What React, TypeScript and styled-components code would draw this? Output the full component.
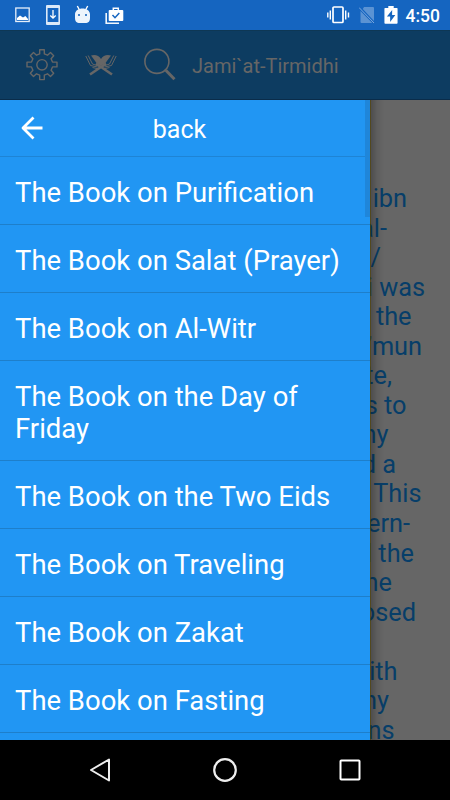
import React from "react";
import styled, { createGlobalStyle } from "styled-components";

const Global = createGlobalStyle`
  *, *::before, *::after { box-sizing: border-box; }
  body { margin: 0; background: #000; font-family: Roboto, "Liberation Sans", sans-serif; }
  svg { display: block; flex: none; }
`;

const Screen = styled.div`
  width: 450px;
  height: 800px;
  display: flex;
  flex-direction: column;
  overflow: hidden;
`;

const StatusBar = styled.header`
  height: 30px;
  flex: none;
  display: flex;
  justify-content: space-between;
  align-items: center;
  padding: 0 10px 0 14px;
  background: #1565c0;
  color: #fff;
`;

const StatusGroup = styled.div<{ $gap: number }>`
  display: flex;
  align-items: center;
  gap: ${(p) => p.$gap}px;
`;

const Clock = styled.span`
  font-size: 17.5px;
  font-weight: 500;
  line-height: 30px;
  padding-top: 1px;
`;

const Toolbar = styled.div`
  height: 70px;
  flex: none;
  display: flex;
  align-items: center;
  padding: 0 0 0 26px;
  gap: 26px;
  color: #666;
  background: #0d3c61;
  box-shadow: inset 0 1px 0 #0e3754, inset 0 -1px 0 #0a2c4a;
`;

const ToolbarTitle = styled.h1`
  margin: 1px 0 0 -12px;
  font-size: 20px;
  font-weight: 400;
  line-height: 24px;
`;

const Main = styled.main`
  position: relative;
  height: 640px;
  flex: none;
  overflow: hidden;
  background: #666;
`;

const Passage = styled.div`
  padding-top: 84px;
  color: #073e69;
  font-size: 25.3px;
  line-height: 29.55px;
`;

const PassageLine = styled.div<{ $end: number }>`
  width: ${(p) => p.$end}px;
  height: 29.55px;
  text-align: right;
  white-space: pre;
`;

const Drawer = styled.nav`
  position: absolute;
  top: 0;
  left: 0;
  width: 370px;
  height: 640px;
  overflow: hidden;
  background: #2196f3;
  color: #fff;
`;

const DrawerShadow = styled.div`
  position: absolute;
  top: 0;
  left: 370px;
  width: 14px;
  height: 640px;
  border-left: 1px solid rgba(75, 60, 0, 0.7);
  background: linear-gradient(90deg, rgba(0, 0, 0, 0.24), rgba(0, 0, 0, 0.08) 50%, transparent);
`;

const DrawerHeader = styled.div`
  height: 57px;
  display: grid;
  grid-template-columns: 44px 1fr 75px;
  align-items: center;
  padding-left: 20px;
  border-bottom: 1px solid #1e84d5;
  font-size: 25px;
  text-align: center;
`;

const DrawerTitle = styled.span`
  padding-top: 2px;
`;

const BookRow = styled.div`
  padding: 20px 15px 15px;
  border-bottom: 1px solid #1e7fca;
  font-size: 27.46px;
  line-height: 32px;
`;

const ScrollThumb = styled.div`
  position: absolute;
  top: 0;
  right: 0;
  width: 5px;
  height: 117px;
  background: #1f86da;
`;

const NavBar = styled.footer`
  height: 60px;
  flex: none;
  display: flex;
  justify-content: space-between;
  align-items: center;
  padding: 0 88px;
  background: #000;
`;

const books = [
  "The Book on Purification",
  "The Book on Salat (Prayer)",
  "The Book on Al-Witr",
  "The Book on the Day of Friday",
  "The Book on the Two Eids",
  "The Book on Traveling",
  "The Book on Zakat",
  "The Book on Fasting",
];

const passage: [string, number][] = [
  ["ibn", 407],
  ["al-", 387],
  ["/", 381],
  ["i was", 425],
  ["the", 411.5],
  ["\u2019mun", 422],
  ["te,", 392],
  ["s to", 406.5],
  ["ny", 388.5],
  ["d a", 396],
  ["This", 421.5],
  ["ern-", 410],
  ["d the", 414],
  ["ne", 392],
  ["osed", 416],
  ["", 400],
  ["ith", 397.5],
  ["ny", 389],
  ["ns", 394.5],
];

const PictureIcon = () => (
  <svg width="17" height="18" viewBox="0 0 17 18">
    <rect x="1.8" y="2" width="13.4" height="13.5" fill="none" stroke="#e6effa" strokeWidth="1.3" />
    <path d="M3 14v-2l3-2.6 3 2 2.4-1.4L14 13v1z" fill="#fff" />
  </svg>
);

const UpdateIcon = () => (
  <svg width="16" height="22" viewBox="0 0 16 22">
    <path fillRule="evenodd" d="M2 1h12q1 0 1 1v18q0 1-1 1H2q-1 0-1-1V2q0-1 1-1zm.6 3v14h10.8V4z" fill="#dce9f8" />
    <path d="M8 6v8M5.3 11.5L8 14.2l2.7-2.7" fill="none" stroke="#fff" strokeWidth="1.3" />
  </svg>
);

const AndroidIcon = () => (
  <svg width="17" height="20" viewBox="0 0 17 20">
    <path d="M3.3 1l2.2 4M13.7 1l-2.2 4" stroke="#fff" strokeWidth="1.4" />
    <path d="M1 9.5C1 1.5 16 1.5 16 9.500v3.5c0 5.500-4 5-7.500 5S1 18.500 1 13z" fill="#edf4fc" />
    <rect x="4" y="9" width="2" height="2" fill="#4584cc" />
    <rect x="11" y="9" width="2" height="2" fill="#4584cc" />
  </svg>
);

const CaseIcon = () => (
  <svg width="19" height="19" viewBox="0 0 19 19">
    <path d="M1.2 7v10.2H14" fill="none" stroke="#f2f7fd" strokeWidth="1.6" />
    <path d="M8.3 4V2.2h5V4" fill="none" stroke="#fff" strokeWidth="1.5" />
    <rect x="3.7" y="4" width="14.6" height="11" rx="1" fill="#fff" />
    <path d="M7.5 9l2.5 2.7 4.3-4.8" fill="none" stroke="#1565c0" strokeWidth="1.5" />
  </svg>
);

const VibrateIcon = () => (
  <svg width="24" height="20" viewBox="0 0 24 20">
    <rect x="6" y="2" width="10" height="15.5" rx="1" fill="none" stroke="#fff" strokeWidth="1.7" />
    <path d="M.8 7.5v5M3.3 5.5v9M18.700 5.5v9M21.500 7.5v5" stroke="#fff" strokeWidth="1.4" />
  </svg>
);

const NoSimIcon = () => (
  <svg width="17" height="20" viewBox="0 0 17 20">
    <path d="M5 2h9q1 0 1 1v13L3.800 4zM1.500 6L13.300 18H2.500q-1 0-1-1z" fill="#5b93d3" />
    <path d="M0 2.500L15 18" stroke="#7ba7dd" strokeWidth="1" />
  </svg>
);

const BatteryIcon = () => (
  <svg width="14" height="20" viewBox="0 0 13 20" preserveAspectRatio="none">
    <path d="M1 3h3V1h5v2h3q.6 0 .6.6V18q0 .8-.8.8H1.2q-.8 0-.8-.8V3.6Q.4 3 1 3z" fill="#fff" />
    <path d="M7.6 5L2.7 11.5h3V17l4.8-7h-3z" fill="#1565c0" />
  </svg>
);

const GearIcon = () => (
  <svg width="32" height="34" viewBox="0 0 32 34" fill="none" stroke="currentColor" strokeWidth="1.4">
    <path
      strokeLinejoin="round"
      d="M13.7 1.8h4.6v4l3.2 1.4 3-2.7 3.2 3.2-2.6 3 1.4 3.4h4.5v4.8h-4.5l-1.4 3.4 2.6 3-3.2 3.2-3-2.7-3.2 1.4v4.4h-4.6v-4.4l-3.2-1.4-3 2.7-3.2-3.2 2.6-3-1.4-3.4H1v-4.8h4.5l1.4-3.4-2.6-3L7.5 4.5l3 2.7 3.2-1.4z"
    />
    <circle cx="16" cy="16.8" r="5.2" />
  </svg>
);

const QuranIcon = () => (
  <svg width="34" height="26" viewBox="0 0 34 26" fill="none" stroke="currentColor">
    <path d="M7 3.5C11 2 15 3.5 17 7c2-3.5 6-5 10-3.5l-5.500 7.500L17 14l-4.500-3z" fill="currentColor" stroke="none" />
    <path d="M4.2 3.5L8.5 12l8.5 3 8.5-3 4.3-8.5M1.8 4L6.5 13.5l7 1.5M32.2 4L27.5 13.5l-7 1.5" strokeWidth="1" />
    <path d="M6 22.5L22 11.5M28 22.5L12 11.5" strokeWidth="2.6" />
    <path d="M8.5 15.5l6.5 1.5M25.5 15.5L19 17" strokeWidth="1" />
  </svg>
);

const SearchIcon = () => (
  <svg width="34" height="34" viewBox="0 0 34 34" fill="none" stroke="currentColor">
    <circle cx="12.9" cy="13.4" r="12" strokeWidth="1.6" />
    <path d="M21 21.5l1.8 1.9" strokeWidth="1.5" />
    <path d="M22 22.5l8.5 8.7" strokeWidth="3" />
  </svg>
);

const BackArrow = () => (
  <svg width="24" height="26" viewBox="0 0 24 26">
    <path d="M13.5 2.5L3 13l10.5 10.5M3 13h19.5" fill="none" stroke="#fff" strokeWidth="2.8" strokeLinejoin="round" />
  </svg>
);

export default function App() {
  return (
    <>
      <Global />
      <Screen>
        <StatusBar>
          <StatusGroup $gap={13.5}>
            <PictureIcon />
            <UpdateIcon />
            <AndroidIcon />
            <CaseIcon />
          </StatusGroup>
          <StatusGroup $gap={8}>
            <VibrateIcon />
            <NoSimIcon />
            <BatteryIcon />
            <Clock>4:50</Clock>
          </StatusGroup>
        </StatusBar>
        <Toolbar>
          <GearIcon />
          <QuranIcon />
          <SearchIcon />
          <ToolbarTitle>Jami`at-Tirmidhi</ToolbarTitle>
        </Toolbar>
        <Main>
          <Passage>
            {passage.map(([text, end], i) => (
              <PassageLine key={i} $end={end}>{text}</PassageLine>
            ))}
          </Passage>
          <DrawerShadow />
          <Drawer>
            <DrawerHeader>
              <BackArrow />
              <DrawerTitle>back</DrawerTitle>
            </DrawerHeader>
            {books.map((book) => (
              <BookRow key={book}>{book}</BookRow>
            ))}
            <ScrollThumb />
          </Drawer>
        </Main>
        <NavBar>
          <svg width="24" height="28" viewBox="0 0 24 28">
            <path d="M3 14L21 3.5v21z" fill="none" stroke="#eee" strokeWidth="2" strokeLinejoin="round" />
          </svg>
          <svg width="26" height="26" viewBox="0 0 26 26">
            <circle cx="13" cy="13" r="10.8" fill="none" stroke="#eee" strokeWidth="2.2" />
          </svg>
          <svg width="24" height="24" viewBox="0 0 24 24">
            <rect x="2.5" y="2.5" width="19" height="19" rx="0.8" fill="none" stroke="#fff" strokeWidth="2" />
          </svg>
        </NavBar>
      </Screen>
    </>
  );
}
